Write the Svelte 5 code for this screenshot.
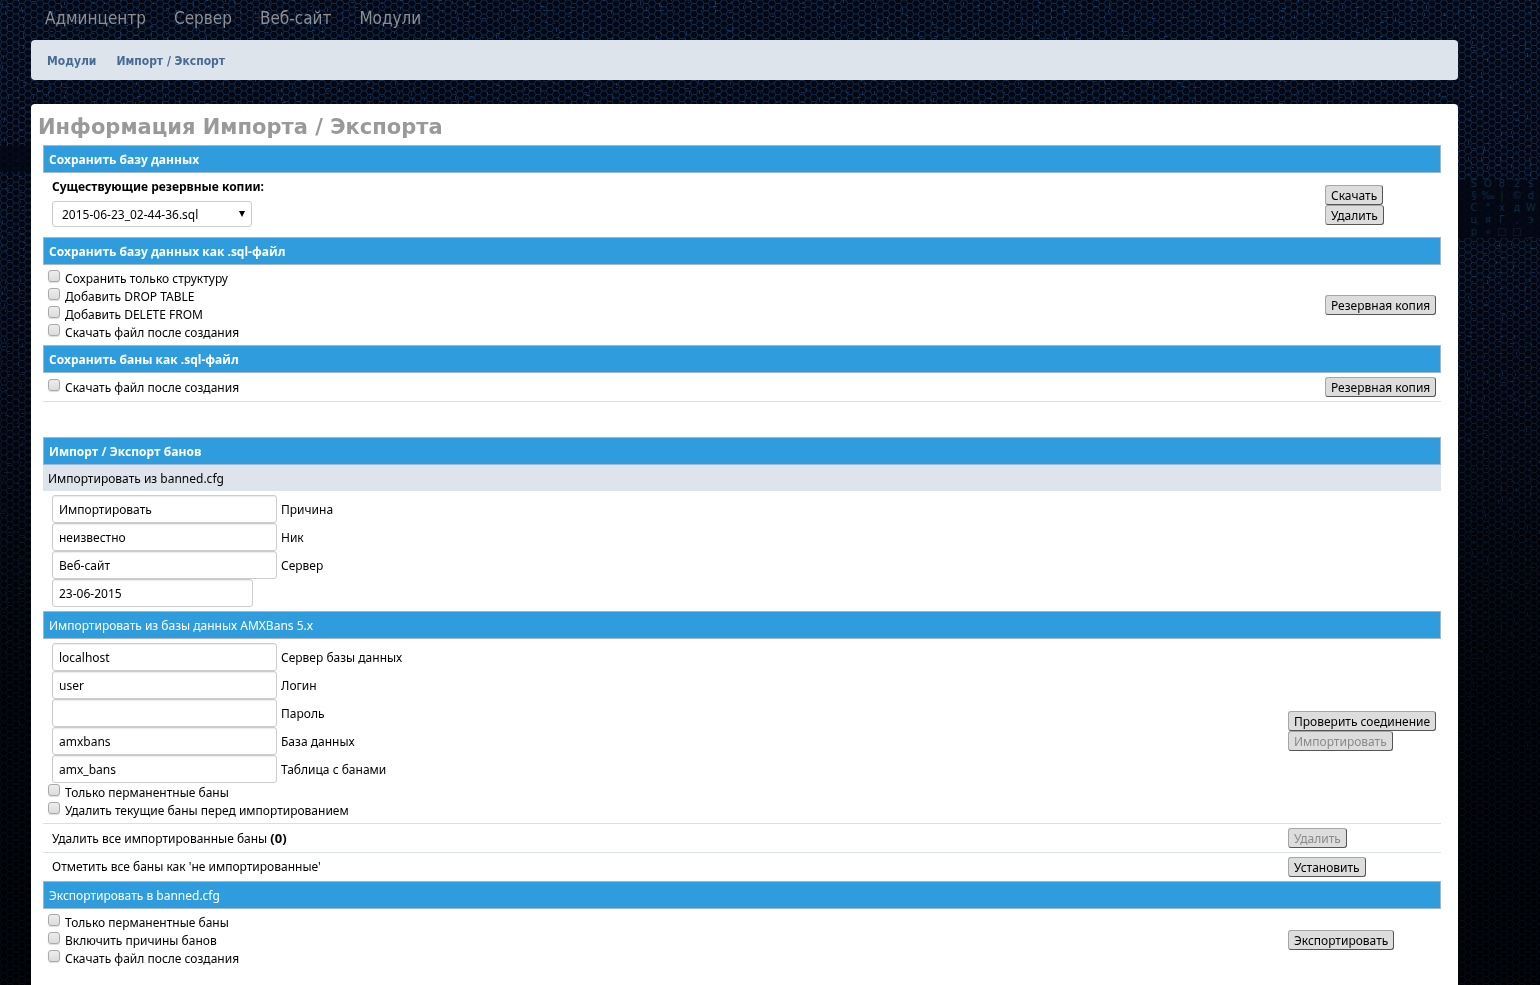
<script>
  const menu = ['Админцентр', 'Сервер', 'Веб-сайт', 'Модули'];
  const submenu = ['Модули', 'Импорт / Экспорт'];

  const dumpOptions = [
    { id: 'structure', label: 'Сохранить только структуру' },
    { id: 'drop', label: 'Добавить DROP TABLE' },
    { id: 'delete', label: 'Добавить DELETE FROM' },
    { id: 'download', label: 'Скачать файл после создания' }
  ];
  const banDumpOptions = [{ id: 'bans-download', label: 'Скачать файл после создания' }];
  const importOptions = [
    { id: 'import-permanent', label: 'Только перманентные баны' },
    { id: 'import-clear', label: 'Удалить текущие баны перед импортированием' }
  ];
  const exportOptions = [
    { id: 'export-permanent', label: 'Только перманентные баны' },
    { id: 'export-reasons', label: 'Включить причины банов' },
    { id: 'export-download', label: 'Скачать файл после создания' }
  ];

  let fileFields = $state([
    { id: 'reason', label: 'Причина', value: 'Импортировать' },
    { id: 'nick', label: 'Ник', value: 'неизвестно' },
    { id: 'server', label: 'Сервер', value: 'Веб-сайт' }
  ]);
  let dbFields = $state([
    { id: 'db-host', label: 'Сервер базы данных', value: 'localhost' },
    { id: 'db-user', label: 'Логин', value: 'user' },
    { id: 'db-password', label: 'Пароль', value: '', type: 'password' },
    { id: 'db-name', label: 'База данных', value: 'amxbans' },
    { id: 'db-table', label: 'Таблица с банами', value: 'amx_bans' }
  ]);
  let date = $state('23-06-2015');
  let imported = $state(0);

  // dim symbols in the dark strip of the backdrop
  const symbols = [
    [1474, 'S§Сцр'],
    [1488, 'O‰"я«'],
    [1502, '8|хГ□'],
    [1517, '2©д,□'],
    [1531, '$dWэ_']
  ];

  // broken digital rain: short strokes in columns, seeded so it never changes
  function rain() {
    let seed = 7;
    const rnd = n => {
      seed = (seed * 16807) % 2147483647;
      return seed % n;
    };
    let d = '';
    for (let col = 0; col < 180; col++) {
      const x = 2 + Math.round(col * 14.5);
      for (let y = 0; y < 760; y += 5) {
        const px = x + rnd(7);
        const py = y + rnd(4);
        const kind = rnd(8);
        if (px > 1456 && py > 178 && py < 240) continue;
        if (kind < 2) d += `M${px} ${py}.5h${1 + rnd(4)}`;
        else if (kind < 5) d += `M${px}.5 ${py}v${1 + rnd(4)}`;
      }
    }
    return d;
  }
  const strokes = rain();
</script>

{#snippet checks(options)}
  {#each options as { id, label }}
    <div class="check">
      <input type="checkbox" {id} />
      <label for={id}>{label}</label>
    </div>
  {/each}
{/snippet}

{#snippet inputs(fields)}
  {#each fields as field}
    <div class="field">
      <input class="text" type={field.type ?? 'text'} id={field.id} bind:value={field.value} />
      <label for={field.id}>{field.label}</label>
    </div>
  {/each}
{/snippet}

<svg class="backdrop" aria-hidden="true">
  <defs>
    <pattern id="hex" width="12" height="7" patternUnits="userSpaceOnUse">
      <path d="M0 3.5L2 0H6L8 3.5L6 7H2ZM8 3.5H12" fill="none" stroke="#0f2d4d" stroke-width="1" />
    </pattern>
    <linearGradient id="shade" x1="0" y1="0" x2="0" y2="1">
      <stop offset="0" stop-color="#000" stop-opacity="0" />
      <stop offset="0.3" stop-color="#000" stop-opacity="0.2" />
      <stop offset="0.7" stop-color="#000" stop-opacity="0.7" />
      <stop offset="1" stop-color="#000" stop-opacity="0.75" />
    </linearGradient>
  </defs>
  <rect width="100%" height="100%" fill="#040815" />
  <rect width="100%" height="100%" fill="url(#hex)" />
  <path d={strokes} fill="none" stroke="#1b5a9c" stroke-opacity="0.5" />
  <rect x="1458" y="180" width="100%" height="58" fill="#040916" fill-opacity="0.9" />
  <rect y="146" width="31" height="26" fill="#040916" fill-opacity="0.8" />
  {#each symbols as [x, column]}
    {#each column as symbol, i}
      <text {x} y={187 + i * 12} text-anchor="middle">{symbol}</text>
    {/each}
  {/each}
  <rect width="100%" height="100%" fill="url(#shade)" />
</svg>

<div class="page">
  <nav class="menu">
    {#each menu as item}
      <a href="#top">{item}</a>
    {/each}
  </nav>

  <nav class="submenu">
    {#each submenu as item}
      <a href="#top">{item}</a>
    {/each}
  </nav>

  <main>
    <h1>Информация Импорта / Экспорта</h1>

    <table class="save">
      <colgroup><col /><col class="actions" /></colgroup>
      <tbody>
        <tr><th colspan="2">Сохранить базу данных</th></tr>
        <tr>
          <td class="backups">
            <label for="backup">Существующие резервные копии:</label>
            <div class="select">
              <select id="backup">
                <option>2015-06-23_02-44-36.sql</option>
              </select>
            </div>
          </td>
          <td>
            <div class="buttons">
              <button>Скачать</button>
              <button>Удалить</button>
            </div>
          </td>
        </tr>
        <tr><th colspan="2">Сохранить базу данных как .sql-файл</th></tr>
        <tr>
          <td>{@render checks(dumpOptions)}</td>
          <td><div class="buttons"><button>Резервная копия</button></div></td>
        </tr>
        <tr><th colspan="2">Сохранить баны как .sql-файл</th></tr>
        <tr class="line">
          <td>{@render checks(banDumpOptions)}</td>
          <td><div class="buttons"><button>Резервная копия</button></div></td>
        </tr>
      </tbody>
    </table>

    <table class="bans">
      <colgroup><col /><col class="actions" /></colgroup>
      <tbody>
        <tr><th colspan="2">Импорт / Экспорт банов</th></tr>
        <tr><td class="caption" colspan="2">Импортировать из banned.cfg</td></tr>
        <tr>
          <td colspan="2">
            {@render inputs(fileFields)}
            <div class="field">
              <input class="text date" type="text" aria-label="Дата" bind:value={date} />
            </div>
          </td>
        </tr>
        <tr><th class="section" colspan="2">Импортировать из базы данных AMXBans 5.x</th></tr>
        <tr class="line">
          <td>
            {@render inputs(dbFields)}
            {@render checks(importOptions)}
          </td>
          <td>
            <div class="buttons">
              <button>Проверить соединение</button>
              <button disabled>Импортировать</button>
            </div>
          </td>
        </tr>
        <tr class="line">
          <td class="note">Удалить все импортированные баны <b>({imported})</b></td>
          <td><div class="buttons"><button disabled={imported === 0}>Удалить</button></div></td>
        </tr>
        <tr>
          <td class="note">Отметить все баны как 'не импортированные'</td>
          <td><div class="buttons"><button>Установить</button></div></td>
        </tr>
        <tr><th class="section" colspan="2">Экспортировать в banned.cfg</th></tr>
        <tr>
          <td>{@render checks(exportOptions)}</td>
          <td><div class="buttons"><button>Экспортировать</button></div></td>
        </tr>
      </tbody>
    </table>
  </main>
</div>

<style>
:global(body) {
  background: #000;
}

.backdrop {
  position: fixed;
  top: 0;
  left: 0;
  width: 100%;
  height: 100%;
  z-index: -1;
}

.backdrop text {
  fill: #12304e;
  font: 10px "DejaVu Sans", sans-serif;
}

.page {
  box-sizing: border-box;
  color: #000;
  display: flex;
  flex-direction: column;
  font: 12px/18px "Noto Sans", "Open Sans", sans-serif;
  min-height: 100vh;
  padding: 0 82px 0 31px;
}

a {
  text-decoration: none;
}

.menu {
  display: flex;
  gap: 28px;
  height: 40px;
  padding-left: 14px;
}

.menu a {
  color: #8c8f94;
  font: 17px/36px "DejaVu Sans Condensed", Tahoma, sans-serif;
}

.submenu {
  align-items: center;
  background: #dee4eb;
  border-radius: 4px;
  box-sizing: border-box;
  display: flex;
  gap: 20px;
  height: 40px;
  margin-bottom: 24px;
  padding: 2px 16px 0;
}

.submenu a {
  color: #476a94;
  font: bold 12px/18px "DejaVu Sans Condensed", Tahoma, sans-serif;
}

main {
  background: #fff;
  border-radius: 4px 4px 0 0;
  flex: 1;
  padding: 0 17px 18px 12px;
}

h1 {
  color: #999;
  font: bold 21px/47px "DejaVu Sans", Verdana, sans-serif;
  height: 41px;
  margin: 0 0 0 -5px;
}

table {
  border-spacing: 0;
  table-layout: fixed;
  width: 100%;
}

.save {
  margin-bottom: 35px;
}

.save .actions {
  width: 121px;
}

.bans .actions {
  width: 158px;
}

th {
  background: #2f9ddd;
  border: 1px solid #a0b7cf;
  color: #fff;
  font: bold 12px/18px "Open Sans", "Noto Sans", sans-serif;
  padding: 5px 5px 3px;
  text-align: left;
}

th.section {
  font: 12px/18px "Noto Sans", "Open Sans", sans-serif;
}

td {
  padding: 4px 5px;
}

.line td {
  border-bottom: 1px solid #d9dfe9;
}

.caption {
  background: #dee4eb;
  padding: 5px 5px 3px;
}

.note {
  padding-left: 9px;
}

.note b {
  font-size: 13px;
}

.backups {
  padding: 5px 9px 10px;
}

.backups label {
  display: block;
  font-weight: bold;
  margin-bottom: 5px;
}

.select {
  position: relative;
  width: 200px;
}

.select::after {
  border: 3px solid transparent;
  border-bottom: 0;
  border-top: 6px solid #000;
  content: "";
  pointer-events: none;
  position: absolute;
  right: 7px;
  top: 10px;
}

select {
  appearance: none;
  background: #fff;
  border: 1px solid #ccc;
  border-radius: 3px;
  color: #000;
  display: block;
  font: inherit;
  height: 26px;
  padding: 2px 9px 0;
  width: 100%;
}

.check {
  display: flex;
  gap: 5px;
  height: 18px;
}

.check label {
  line-height: 20px;
}

.check input {
  appearance: none;
  background: linear-gradient(#ededed, #dcdcdc);
  border: 1px solid #a9a9a9;
  border-radius: 3px;
  box-shadow: 0 1px 1px #ddd;
  height: 12px;
  margin: 1px 0 0;
  width: 12px;
}

.field {
  align-items: center;
  display: flex;
  gap: 4px;
  padding-left: 4px;
}

.field label {
  padding-top: 2px;
}

.text {
  background: #fff;
  border: 1px solid #ccc;
  border-radius: 3px;
  box-shadow: inset 0 1px 1px #eee;
  box-sizing: border-box;
  color: #000;
  font: inherit;
  height: 28px;
  padding: 0 6px;
  width: 225px;
}

.date {
  width: 201px;
}

.buttons {
  align-items: flex-start;
  display: flex;
  flex-direction: column;
}

button {
  background: #ddd;
  border: 1px solid;
  border-color: #a6a6a6 #555 #555 #a6a6a6;
  border-radius: 3px;
  color: #000;
  font: 12px/16px "Noto Sans", "Open Sans", sans-serif;
  height: 20px;
  padding: 2px 5px 0;
  white-space: nowrap;
}

button:disabled {
  color: #8a8a8a;
}
</style>
